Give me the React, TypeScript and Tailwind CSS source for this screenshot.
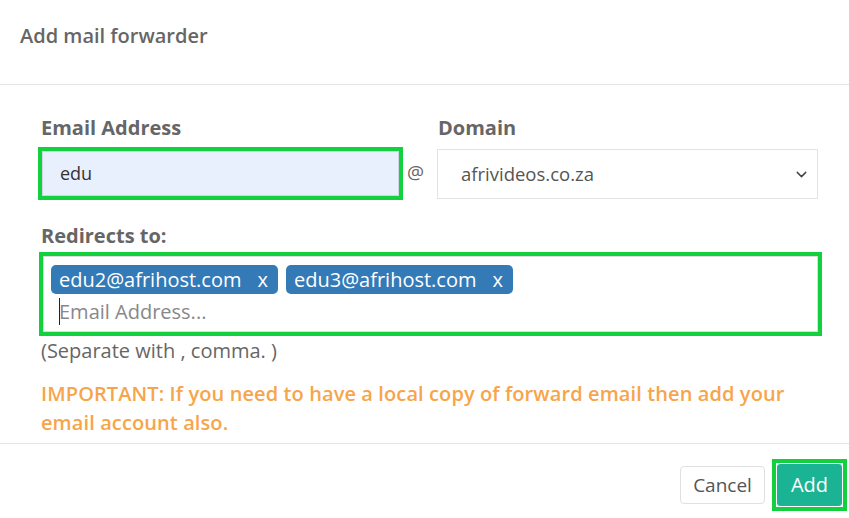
import { ChevronDown } from 'lucide-react';

const green = 'border-[4px] border-[#12d03e]';

function Tag({ email }: { email: string }) {
  return (
    <span className="flex h-[29px] items-center gap-[16px] rounded-[5px] bg-[#337ab7] pl-[8px] pr-[10px] text-[20px] leading-none text-white">
      <span>{email}</span>
      <span>x</span>
    </span>
  );
}

export default function App() {
  return (
    <div className="h-[518px] w-[849px] bg-white font-['Open_Sans',sans-serif] text-[#666]">
      <div className="flex h-[85px] items-start border-b border-[#e5e5e5] px-5 pt-[22px]">
        <h1 className="text-[20px] font-semibold leading-[28px] text-[#666]">Add mail forwarder</h1>
      </div>

      <div className="pl-[38px] pr-[27px] pt-[29px]">
        <div className="flex items-start">
          <div className="w-[365px] shrink-0">
            <label className="block pl-[3px] text-[20px] font-bold leading-[28px]">Email Address</label>
            <div className={`mt-[5px] h-[53px] ${green}`}>
              <div className="flex h-full items-center border border-[#cfd6e0] bg-[#e8f0fe] pl-[17px] text-[18px] text-[#333]">
                edu
              </div>
            </div>
          </div>
          <span className="mt-[44px] w-[34px] shrink-0 pl-[4px] text-[19px] leading-[28px] text-[#666]">@</span>
          <div className="w-[381px] shrink-0">
            <label className="block pl-[1px] text-[20px] font-bold leading-[28px]">Domain</label>
            <div className="mt-[7px] flex h-[50px] items-center justify-between border border-[#e3e3e3] pl-[23px] pr-[7px] text-[18.5px] text-[#555]">
              <span>afrivideos.co.za</span>
              <ChevronDown size={17} strokeWidth={2} className="text-[#444]" />
            </div>
          </div>
        </div>

        <label className="mt-[22px] block pl-[3px] text-[20px] font-bold leading-[28px]">Redirects to:</label>
        <div className={`ml-[1px] mt-[2px] h-[84px] w-[783px] ${green}`}>
          <div className="h-full border border-[#dcdcdc] bg-white pl-[7px] pt-[8px]">
            <div className="flex gap-[8px]">
              <Tag email="edu2@afrihost.com" />
              <Tag email="edu3@afrihost.com" />
            </div>
            <div className="mt-[4px] flex h-[27px] items-center pl-[8px] text-[20px] text-[#888]">
              <span className="mr-[-1px] inline-block h-[27px] w-px bg-[#222]" />
              <span>Email Address...</span>
            </div>
          </div>
        </div>
        <p className="mt-[1px] pl-[3px] text-[20px] leading-[28px]">(Separate with , comma. )</p>

        <p className="mt-[14px] pl-[3px] text-[20px] font-semibold leading-[29px] tracking-[0.1px] text-[#f7a54a]">
          IMPORTANT: If you need to have a local copy of forward email then add your email account also.
        </p>
      </div>

      <div className="mt-[6px] flex items-start justify-end gap-[7px] border-t border-[#e5e5e5] pr-[2px] pt-[15px]">
        <button
          type="button"
          className="mt-[7px] h-[38px] w-[85px] rounded-[4px] border border-[#e0e0e0] bg-white text-[19px] text-[#555]"
        >
          Cancel
        </button>
        <div className={`${green} p-0`}>
          <button
            type="button"
            className="h-[44px] w-[67px] rounded-[4px] border border-white bg-[#1ab394] text-[20px] text-white"
          >
            Add
          </button>
        </div>
      </div>
    </div>
  );
}
